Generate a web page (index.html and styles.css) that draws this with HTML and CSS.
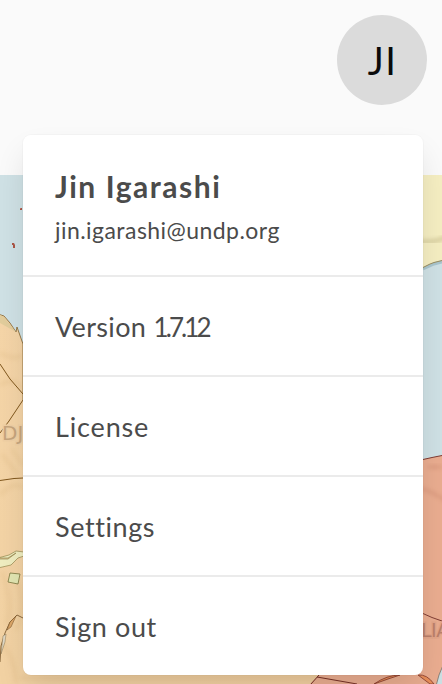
FILE: index.html
```html
<!DOCTYPE html>
<html lang="en">
<head>
<meta charset="utf-8">
<title>User menu</title>
<link rel="stylesheet" href="styles.css">
</head>
<body>
<div class="app">
  <header class="header"><div class="avatar">JI</div></header>
  <main class="map">
    <svg viewBox="0 175 442 509" width="442" height="509">
      <defs>
        <linearGradient id="relief" x1="0" y1="0" x2="1" y2="1">
          <stop offset="0" stop-color="#f5d5a8"/><stop offset=".5" stop-color="#f2d2a3"/><stop offset="1" stop-color="#f2d0a2"/>
        </linearGradient>
        <filter id="soft"><feGaussianBlur stdDeviation="2"/></filter>
      </defs>
      <rect y="175" width="442" height="509" fill="#cfe1e5"/>
      <path d="M20.500 208h1.500v2h-2v-1zM12 243h2l1 2v3h-2v-3h-1z" fill="#ac5546"/>
      <path d="M-2 314L4 316 10 323 16 332 17 327 23 344V400H320V686H-2Z" fill="url(#relief)" stroke="#806029" stroke-width=".8"/>
      <path d="M0 315L4 317 16 332 0 323Z" fill="#e2cd9c"/>
      <g fill="none" stroke="#d8b37c" stroke-width="4" opacity=".25" filter="url(#soft)">
        <path d="M0 353Q15 361 23 355M0 385Q14 376 23 389M2 454L18 475M12 449L23 466M0 495Q15 480 23 488M2 572Q13 600 7 624M18 580Q26 612 16 630M0 640Q16 660 16 684M20 678H320"/>
      </g>
      <path d="M0 364L10 379 23 394M23 400L9 421 0 433M0 480.500L14 478.500 23 478" fill="none" stroke="#80571d"/>
      <text x="2" y="440" class="map-label">DJ</text>
      <path d="M-2 558L9 555 16 551 24 552V556L18 558 11 565 -2 568V559H8L16 553 8 558Z" fill="#efedc0" stroke="#94864d" stroke-width=".7"/>
      <path d="M10 573L20 574 18 584 8 582Z" fill="#e2e6b2" stroke="#77733c" stroke-width=".8"/>
      <path d="M23 618L17 615 10 622 5 633 1 646 0 662" fill="none" stroke="#704e24" stroke-width=".8"/>
      <path d="M16 616L10 622 7 630 11 627Z" fill="#dca668" stroke="#704e24" stroke-width=".5"/>
      <path d="M3 636L6 634 5 642 1 654Z" fill="#ded7c4" stroke="#8b7653" stroke-width=".5"/>
      <path d="M423 175H442V260L434 262 423 267.500Z" fill="#f5eec2"/>
      <path d="M418 241Q434 244 448 236" fill="none" stroke="#b8ac79" stroke-width="4" opacity=".5" filter="url(#soft)"/>
      <path d="M423 269L434 264 442 262" fill="none" stroke="#a9c5cd" stroke-width="3"/>
      <path d="M423 267.500L430 264 434 262.500 442 260.500" fill="none" stroke="#9b8d5e"/>
      <path d="M310 684L319 675 422 600V459.500L432 457.500 442 455.500V684Z" fill="#eaad90"/>
      <path d="M423 459.500L432 457.500 442 455.500M423 613.500L432 617.500 442 621" fill="none" stroke="#803d34"/>
      <path d="M418 488Q430 490 448 502M428 467H442" fill="none" stroke="#bd755e" stroke-width="3" opacity=".35" filter="url(#soft)"/>
      <text x="421" y="637" class="map-label map-label-east">LIA</text>
      <path d="M311 684L319 675M317 677L357 684" fill="none" stroke="#773126"/>
      <path d="M374 684Q387 675 400 675L388 679 374 684ZM418 675Q427 674 434 684H430Z" fill="#e88e59" stroke="#85382b" stroke-width=".8"/>
      <path d="M444 663L439 675 436 686H444Z" fill="#cbdfe3" stroke="#6d6961" stroke-width=".7"/>
    </svg>
  </main>
  <nav class="menu">
    <div class="profile">
      <div class="name">Jin Igarashi</div>
      <div class="email">jin.igarashi@undp.org</div>
    </div>
    <div class="item version"><span>Version <span class="number">1.7.12</span></span></div>
    <div class="item license">License</div>
    <div class="item">Settings</div>
    <div class="item">Sign out</div>
  </nav>
</div>
</body>
</html>
```
FILE: styles.css
```css
* { box-sizing: border-box; }
body { margin: 0; font-family: Lato, "Liberation Sans", sans-serif; color: #4b4b4b; }
.app { position: relative; width: 442px; height: 684px; overflow: hidden; background: #fafafa; }
.header { height: 175px; padding: 15px; display: flex; justify-content: flex-end; align-items: flex-start; }
.avatar { width: 90px; height: 90px; border-radius: 50%; background: #dbdbdb; color: #0a0a0a; display: flex; align-items: center; justify-content: center; font-size: 38px; line-height: 46px; letter-spacing: 1.5px; padding-left: 1px; }
.map { height: 509px; }
.map svg { display: block; }
.map-label { font: 20px "DejaVu Sans", sans-serif; fill: #c6a57d; stroke: #efcfa4; stroke-width: 3px; paint-order: stroke; }
.map-label-east { font-size: 19px; letter-spacing: -.5px; fill: #bb806b; stroke: #e3a589; }
.menu { position: absolute; left: 23px; top: 135px; width: 400px; height: 540px; background: #fff; border-radius: 8px; overflow: hidden; box-shadow: 0 16px 32px -4px rgba(10,10,10,.12), 0 0 0 1px rgba(10,10,10,.02); }
.profile { height: 140px; padding: 32px 32px 0; }
.name { font-size: 30px; line-height: 38px; font-weight: 700; letter-spacing: 1.55px; white-space: nowrap; }
.email { font-size: 23px; line-height: 28px; margin-top: 11px; letter-spacing: .45px; white-space: nowrap; }
.item { height: 100px; border-top: 2px solid #ebebeb; padding: 1px 32px 0; display: flex; align-items: center; font-size: 27px; line-height: 36px; letter-spacing: .6px; white-space: nowrap; }
.license { letter-spacing: .85px; }
.version { letter-spacing: .35px; }
.number { font-size: 26px; letter-spacing: -2.9px; }
```
